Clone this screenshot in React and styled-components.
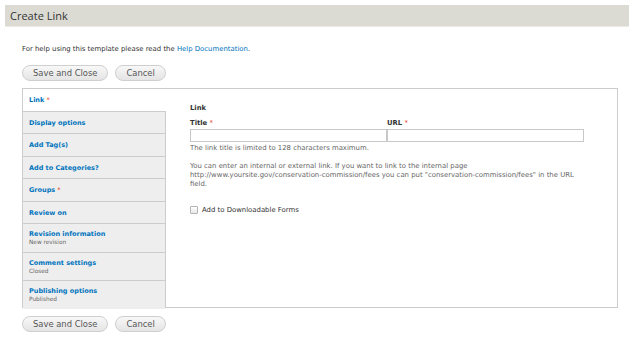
import React from "react";
import styled, { createGlobalStyle } from "styled-components";

const GlobalStyle = createGlobalStyle`
  html, body {
    margin: 0;
    padding: 0;
    background: #fff;
    font-family: "DejaVu Sans", Verdana, sans-serif;
    color: #333;
  }
`;

const Page = styled.div`
  width: 634px;
  height: 338px;
  padding: 5px 5px 0 5px;
  box-sizing: border-box;
`;

const Header = styled.div`
  background: #dcdbd3;
  height: 21px;
  border-bottom: 1px solid #ecebe6;
  display: flex;
  align-items: center;
  padding-left: 5px;
`;

const Title = styled.h1`
  margin: 0;
  font-family: "Open Sans", "DejaVu Sans", sans-serif;
  font-size: 11px;
  font-weight: 400;
  color: #333;
`;

const Content = styled.div`
  padding: 18px 0 0 17px;
  width: 596px;
`;

const Help = styled.p`
  margin: 0 0 11px;
  font-size: 6.9px;
  line-height: 9px;
  color: #333;
`;

const Link = styled.a`
  color: #0074bd;
  text-decoration: none;
`;

const Actions = styled.div`
  display: flex;
  gap: 7px;
  margin-bottom: ${(p) => p.$gap || 0}px;
`;

const Button = styled.button`
  height: 16px;
  padding: 0 10px;
  border: 1px solid #cfcfcf;
  border-radius: 10px;
  background: linear-gradient(#f8f8f8, #e4e4e4);
  color: #555;
  font-family: "DejaVu Sans", sans-serif;
  font-size: 8.4px;
  line-height: 14px;
  box-sizing: border-box;
  white-space: nowrap;
`;

const Panel = styled.div`
  display: flex;
  border: 1px solid #cccccc;
  height: 220px;
  box-sizing: border-box;
  margin-bottom: 8px;
`;

const Tabs = styled.ul`
  list-style: none;
  margin: 0;
  padding: 0;
  width: 143px;
  flex-shrink: 0;
  background: #f2f2f2;
  border-right: 1px solid #cccccc;
  box-sizing: border-box;
`;

const Tab = styled.li`
  height: ${(p) => p.$h}px;
  box-sizing: border-box;
  padding: ${(p) => (p.$sub ? 6 : 7)}px 0 0 6px;
  border-bottom: 1px solid #cccccc;
  background: ${(p) => (p.$active ? "#fff" : "#eeeeee")};
  margin-right: ${(p) => (p.$active ? "-1px" : "0")};
  position: relative;
  &:last-child {
    border-bottom: none;
  }
`;

const TabTitle = styled.div`
  font-size: 6.5px;
  font-weight: 700;
  line-height: 8px;
  color: #0074bd;
`;

const TabSub = styled.div`
  font-size: 5.8px;
  line-height: 8px;
  color: #666;
`;

const Req = styled.span`
  color: #e32700;
  font-weight: 400;
`;

const Pane = styled.div`
  flex: 1;
  padding: 15px 0 0 24px;
  background: #fff;
`;

const Legend = styled.div`
  font-size: 6.8px;
  font-weight: 700;
  line-height: 9px;
  margin-bottom: 6px;
`;

const Fields = styled.div`
  display: grid;
  grid-template-columns: 197px 197px;
`;

const Label = styled.label`
  display: block;
  font-size: 6.8px;
  font-weight: 700;
  line-height: 9px;
  margin-bottom: 1px;
`;

const Input = styled.input`
  display: block;
  width: 197px;
  height: 13px;
  box-sizing: border-box;
  border: 1px solid #c8c8c8;
  margin: 0;
  padding: 0 2px;
`;

const Desc = styled.p`
  margin: ${(p) => p.$top}px 0 0;
  width: 398px;
  font-size: 6.9px;
  line-height: 9px;
  color: #666;
`;

const Check = styled.label`
  display: flex;
  align-items: center;
  gap: 4px;
  margin-top: 17px;
  font-size: 6.9px;
  color: #333;
`;

const Box = styled.span`
  width: 6px;
  height: 6px;
  border: 1px solid #b5b5b5;
  border-radius: 1px;
  background: linear-gradient(#fff, #e8e8e8);
`;

const tabs = [
  { title: "Link", req: true, active: true, h: 23 },
  { title: "Display options", h: 22 },
  { title: "Add Tag(s)", h: 23 },
  { title: "Add to Categories?", h: 22 },
  { title: "Groups", req: true, h: 23 },
  { title: "Review on", h: 22 },
  { title: "Revision information", sub: "New revision", h: 29 },
  { title: "Comment settings", sub: "Closed", h: 28 },
  { title: "Publishing options", sub: "Published", h: 28 },
];

const ActionRow = ({ gap }) => (
  <Actions $gap={gap}>
    <Button>Save and Close</Button>
    <Button>Cancel</Button>
  </Actions>
);

export default function App() {
  return (
    <>
      <GlobalStyle />
      <Page>
        <Header>
          <Title>Create Link</Title>
        </Header>
        <Content>
          <Help>
            For help using this template please read the{" "}
            <Link href="#">Help Documentation</Link>.
          </Help>
          <ActionRow gap={7} />
          <Panel>
            <Tabs>
              {tabs.map((t) => (
                <Tab key={t.title} $h={t.h} $active={t.active} $sub={!!t.sub}>
                  <TabTitle>
                    {t.title}
                    {t.req && <Req> *</Req>}
                  </TabTitle>
                  {t.sub && <TabSub>{t.sub}</TabSub>}
                </Tab>
              ))}
            </Tabs>
            <Pane>
              <Legend>Link</Legend>
              <Fields>
                <div>
                  <Label>
                    Title <Req>*</Req>
                  </Label>
                  <Input type="text" />
                </div>
                <div>
                  <Label>
                    URL <Req>*</Req>
                  </Label>
                  <Input type="text" />
                </div>
              </Fields>
              <Desc $top={2}>
                The link title is limited to 128 characters maximum.
              </Desc>
              <Desc $top={9}>
                You can enter an internal or external link. If you want to link to the internal page
                http://www.yoursite.gov/conservation-commission/fees you can put
                "conservation-commission/fees" in the URL field.
              </Desc>
              <Check>
                <Box />
                Add to Downloadable Forms
              </Check>
            </Pane>
          </Panel>
          <ActionRow gap={0} />
        </Content>
      </Page>
    </>
  );
}
